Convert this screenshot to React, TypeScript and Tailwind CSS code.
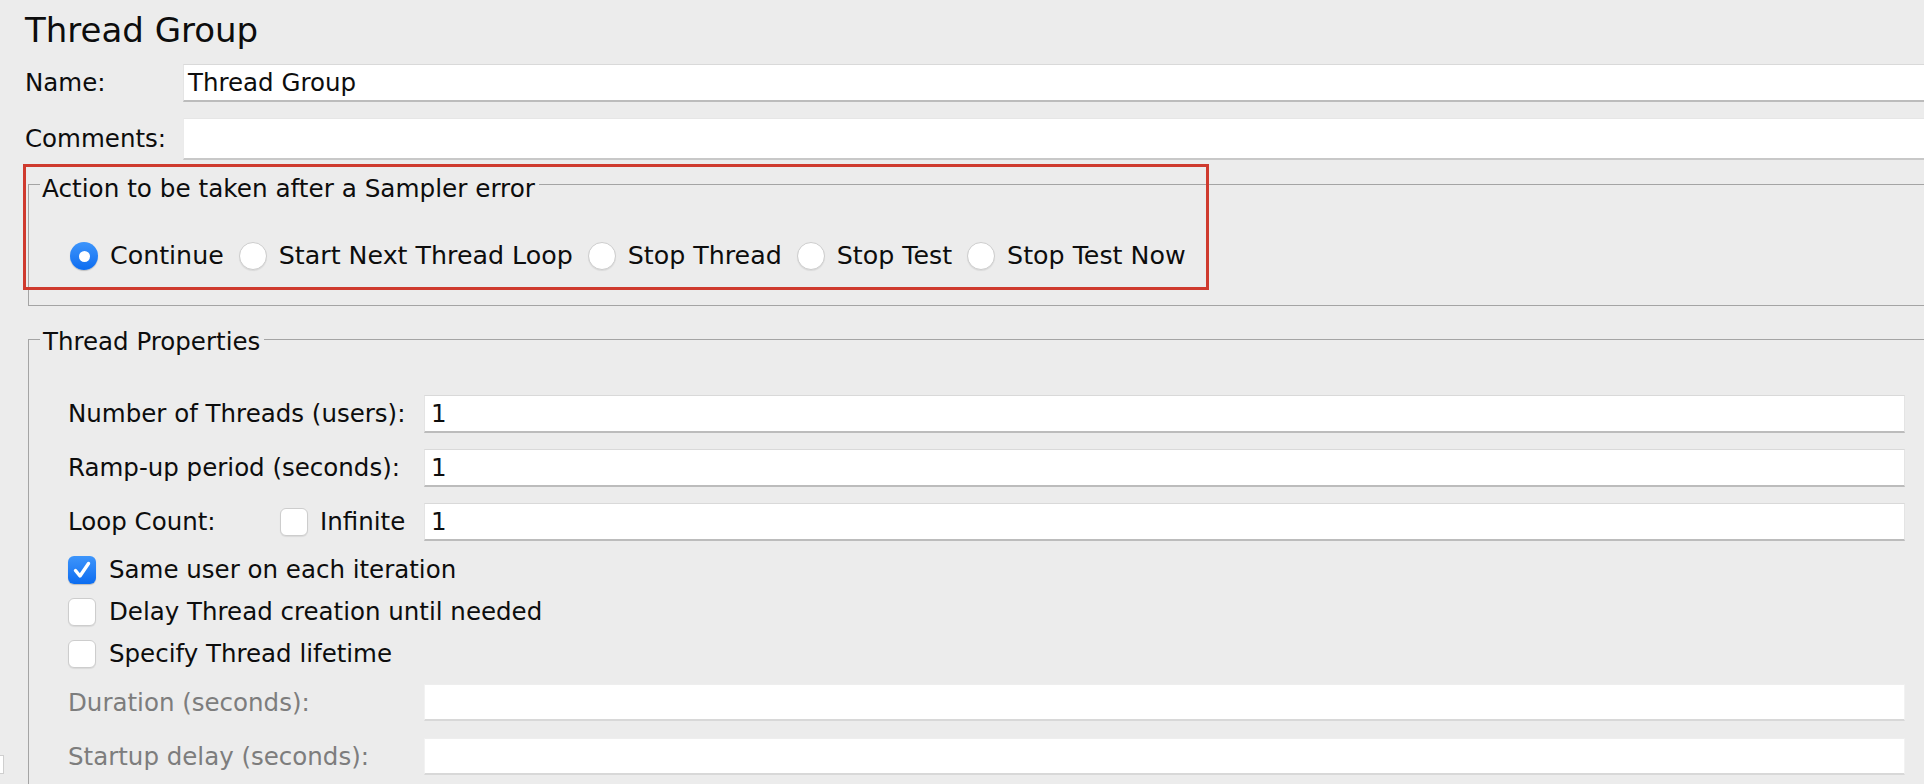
import React from "react";

function Radio({ checked }: { checked?: boolean }) {
  if (checked) {
    return (
      <span className="w-[28px] h-[28px] rounded-full bg-linear-to-b from-[#3d95fb] to-[#0a6cf0] flex items-center justify-center shrink-0 shadow-[0_1px_1px_rgba(0,0,0,0.2)]">
        <span className="w-[11px] h-[11px] rounded-full bg-white" />
      </span>
    );
  }
  return (
    <span className="w-[28px] h-[28px] rounded-full bg-white border border-[#cdcdcd] shadow-[0_1px_1px_rgba(0,0,0,0.08)] shrink-0" />
  );
}

function Check({ checked }: { checked?: boolean }) {
  if (checked) {
    return (
      <span className="w-[28px] h-[28px] rounded-[6px] bg-linear-to-b from-[#3d95fb] to-[#0a6cf0] flex items-center justify-center shrink-0 shadow-[0_1px_1px_rgba(0,0,0,0.2)]">
        <svg width="22" height="22" viewBox="0 0 22 22" fill="none">
          <path d="M4.5 11.5 L9 17 L17.5 4.5" stroke="white" strokeWidth="3.4" strokeLinecap="round" strokeLinejoin="round" />
        </svg>
      </span>
    );
  }
  return (
    <span className="w-[28px] h-[28px] rounded-[6px] bg-white border border-[#cdcdcd] shadow-[0_1px_1px_rgba(0,0,0,0.08)] shrink-0" />
  );
}

function Field({ value, disabled }: { value?: string; disabled?: boolean }) {
  return (
    <div
      className={
        disabled
          ? "w-[1481px] h-[37px] bg-white border-t border-t-[#eeeeee] border-b-2 border-b-[#d8d8d8] border-x border-x-[#f2f2f2] flex items-center pl-[6px]"
          : "w-[1481px] h-[38px] bg-white border-t border-t-[#d9d9d9] border-b-2 border-b-[#bcbcbc] border-x border-x-[#e4e4e4] flex items-center pl-[6px]"
      }
    >
      {value}
    </div>
  );
}

export default function App() {
  const radios = [
    { label: "Continue", checked: true },
    { label: "Start Next Thread Loop" },
    { label: "Stop Thread" },
    { label: "Stop Test" },
    { label: "Stop Test Now" },
  ];
  return (
    <div className="relative w-[1924px] h-[784px] overflow-hidden bg-[#ececec] font-['DejaVu_Sans',sans-serif] text-[24.5px] text-[#0d0d0d] leading-[28px]">
      <div className="pl-[25px] pt-[10px] h-[50px] text-[34px] leading-[40px]">Thread Group</div>

      <div className="flex items-center mt-[14px] h-[38px]">
        <div className="w-[183px] pl-[25px] shrink-0">Name:</div>
        <div className="w-[1760px] h-[38px] bg-white border-t border-t-[#d9d9d9] border-b-2 border-b-[#bcbcbc] border-l border-l-[#e4e4e4] flex items-center pl-[4px] shrink-0">
          Thread Group
        </div>
      </div>

      <div className="flex items-center mt-[16px] h-[42px]">
        <div className="w-[183px] pl-[25px] shrink-0">Comments:</div>
        <div className="w-[1760px] h-[42px] bg-white border-t border-t-[#e6e6e6] border-b-2 border-b-[#c8c8c8] border-l border-l-[#ebebeb] shrink-0" />
      </div>

      <fieldset className="ml-[28px] mt-[5px] w-[1910px] border border-[#a4a4a4] pl-[11px] pb-[35px]">
        <legend className="pt-[10px] pl-[2px] pr-[4px] leading-[28px] text-[24.7px]">Action to be taken after a Sampler error</legend>
        <div className="flex items-center ml-[30px] mt-[39px] h-[28px] gap-[15px] text-[25.3px]">
          {radios.map((r) => (
            <div key={r.label} className="flex items-center gap-[12px]">
              <Radio checked={r.checked} />
              <span>{r.label}</span>
            </div>
          ))}
        </div>
      </fieldset>

      <fieldset className="ml-[28px] mt-[16px] w-[1910px] h-[600px] border border-[#a4a4a4] pl-[11px]">
        <legend className="pt-[6px] pl-[3px] pr-[4px] leading-[28px]">Thread Properties</legend>
        <div className="ml-[28px] mt-[39px] flex flex-col">
          <div className="flex items-center h-[38px]">
            <div className="w-[356px] shrink-0">Number of Threads (users):</div>
            <Field value="1" />
          </div>
          <div className="flex items-center h-[38px] mt-[16px]">
            <div className="w-[356px] shrink-0">Ramp-up period (seconds):</div>
            <Field value="1" />
          </div>
          <div className="flex items-center h-[38px] mt-[16px]">
            <div className="w-[356px] shrink-0 flex items-center">
              <span className="w-[212px]">Loop Count:</span>
              <Check />
              <span className="ml-[12px]">Infinite</span>
            </div>
            <Field value="1" />
          </div>
          <div className="flex items-center h-[28px] mt-[15px] gap-[13px]">
            <Check checked />
            <span>Same user on each iteration</span>
          </div>
          <div className="flex items-center h-[28px] mt-[14px] gap-[13px]">
            <Check />
            <span>Delay Thread creation until needed</span>
          </div>
          <div className="flex items-center h-[28px] mt-[14px] gap-[13px]">
            <Check />
            <span>Specify Thread lifetime</span>
          </div>
          <div className="flex items-center h-[37px] mt-[16px] text-[#7d7d7d]">
            <div className="w-[356px] shrink-0">Duration (seconds):</div>
            <Field disabled />
          </div>
          <div className="flex items-center h-[37px] mt-[17px] text-[#7d7d7d]">
            <div className="w-[356px] shrink-0">Startup delay (seconds):</div>
            <Field disabled />
          </div>
        </div>
      </fieldset>

      <div className="absolute left-[23px] top-[164px] w-[1186px] h-[126px] border-[3px] border-[#cf3a2e] pointer-events-none" />
      <div className="absolute left-0 top-[755px] w-[4px] h-[19px] bg-white border border-l-0 border-[#cfcfcf]" />
    </div>
  );
}
